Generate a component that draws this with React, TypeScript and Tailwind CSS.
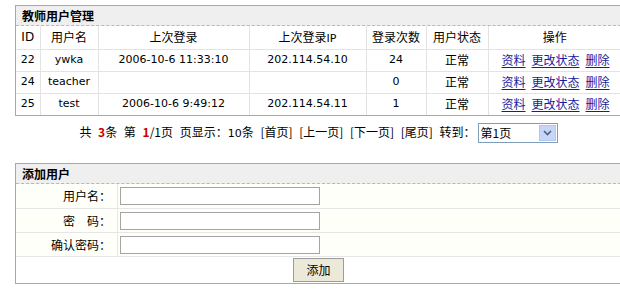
import React from "react";

type User = {
  id: number;
  name: string;
  lastLogin: string;
  lastIp: string;
  count: number;
  status: string;
};

const USERS: User[] = [
  { id: 22, name: "ywka", lastLogin: "2006-10-6 11:33:10", lastIp: "202.114.54.10", count: 24, status: "正常" },
  { id: 24, name: "teacher", lastLogin: "", lastIp: "", count: 0, status: "正常" },
  { id: 25, name: "test", lastLogin: "2006-10-6 9:49:12", lastIp: "202.114.54.11", count: 1, status: "正常" },
];

const cjk = "font-['SimSun','Noto_Sans_CJK_SC',sans-serif]";
const latin = "font-['DejaVu_Sans','Noto_Sans_CJK_SC',sans-serif]";

function Link({ children }: { children: React.ReactNode }) {
  return <a className="text-[#1a1aa0] underline underline-offset-2 cursor-pointer">{children}</a>;
}

function BoxTitle({ children }: { children: React.ReactNode }) {
  return (
    <div className="h-[20px] bg-[#efefef] border-b border-dashed border-[#b8b8b8] pl-[6px] text-[12px] font-bold leading-[19px] text-black">
      {children}
    </div>
  );
}

function FormRow({ label, last }: { label: string; last?: boolean }) {
  return (
    <div className={`flex h-[24px] items-center border-[#e6e6e6] ${last ? "" : "border-b"}`}>
      <div className="w-[102px] h-full border-r border-[#e6e6e6] pr-[6px] text-right text-[12px] leading-[24px]">
        {label}
      </div>
      <input className="ml-[2px] w-[200px] h-[18px] border border-[#a4a4a4] bg-white outline-none" />
    </div>
  );
}

export default function App() {
  const th = "border-r border-b border-[#e3e3e3] font-normal h-[23px] text-[12px]";
  const td = "border-r border-b border-[#e3e3e3] h-[22px] text-center";

  return (
    <div className={`w-[620px] h-[299px] overflow-hidden bg-white pt-[5px] pl-[15px] text-black ${cjk}`}>
      <div className="w-[607px] border border-[#a8a8a8]">
        <BoxTitle>教师用户管理</BoxTitle>
        <table className="w-full table-fixed border-collapse">
          <colgroup>
            <col className="w-[24px]" />
            <col className="w-[58px]" />
            <col className="w-[151px]" />
            <col className="w-[117px]" />
            <col className="w-[60px]" />
            <col className="w-[62px]" />
            <col />
          </colgroup>
          <thead>
            <tr>
              <th className={`${th} ${latin} text-[11px]`}>ID</th>
              <th className={th}>用户名</th>
              <th className={th}>上次登录</th>
              <th className={th}>
                上次登录<span className={`${latin} text-[11px]`}>IP</span>
              </th>
              <th className={th}>登录次数</th>
              <th className={th}>用户状态</th>
              <th className={`${th} border-r-0`}>操作</th>
            </tr>
          </thead>
          <tbody>
            {USERS.map((u, i) => {
              const b = i === USERS.length - 1 ? "border-b-0 h-[21px]" : "";
              return (
                <tr key={u.id}>
                  <td className={`${td} ${b} ${latin} text-[11px]`}>{u.id}</td>
                  <td className={`${td} ${b} ${latin} text-[11px]`}>{u.name}</td>
                  <td className={`${td} ${b} ${latin} text-[11px]`}>{u.lastLogin}</td>
                  <td className={`${td} ${b} ${latin} text-[11px]`}>{u.lastIp}</td>
                  <td className={`${td} ${b} ${latin} text-[11px]`}>{u.count}</td>
                  <td className={`${td} ${b} text-[12px]`}>{u.status}</td>
                  <td className={`${td} ${b} border-r-0 text-[12px] text-left pl-[13px]`}>
                    <span className="inline-flex gap-[6px]">
                      <Link>资料</Link>
                      <Link>更改状态</Link>
                      <Link>删除</Link>
                    </span>
                  </td>
                </tr>
              );
            })}
          </tbody>
        </table>
      </div>

      {/* 分页 */}
      <div className="w-[607px] h-[25px] mt-[4px] flex items-center justify-center gap-[2px] text-[12px]">
        <span className="[word-spacing:4px] whitespace-pre">
          共 <b className="text-[#cc0000]">3</b>条 第 <b className="text-[#cc0000]">1</b>/1页 页显示：
          <span className={`${latin} text-[11px]`}>10</span>条 [首页] [上一页] [下一页] [尾页] 转到：
        </span>
        <div className="flex w-[80px] h-[20px] border border-[#7f9db9] bg-white">
          <span className="flex-1 pl-[2px] leading-[18px]">第1页</span>
          <span className="w-[17px] m-[1px] bg-[#c6d6f7] border border-[#b1c7f2] flex items-center justify-center">
            <svg width="9" height="6" viewBox="0 0 9 6">
              <path d="M1 1 L4.5 4.5 L8 1" stroke="#4d6185" strokeWidth="1.6" fill="none" />
            </svg>
          </span>
        </div>
      </div>

      {/* 添加用户 */}
      <div className="w-[607px] mt-[18px] border border-[#a8a8a8]">
        <BoxTitle>添加用户</BoxTitle>
        <div className="bg-[#fffffa]">
          <div className="border-b border-[#e6e6e6]">
            <FormRow label="用户名：" last />
          </div>
          <FormRow label="密　码：" />
          <FormRow label="确认密码：" />
          <div className="h-[26px] flex items-center justify-center bg-white">
            <button className="w-[51px] h-[24px] border border-[#9c9c9c] bg-[#ece9d8] text-[12px]">
              添加
            </button>
          </div>
        </div>
      </div>
    </div>
  );
}
